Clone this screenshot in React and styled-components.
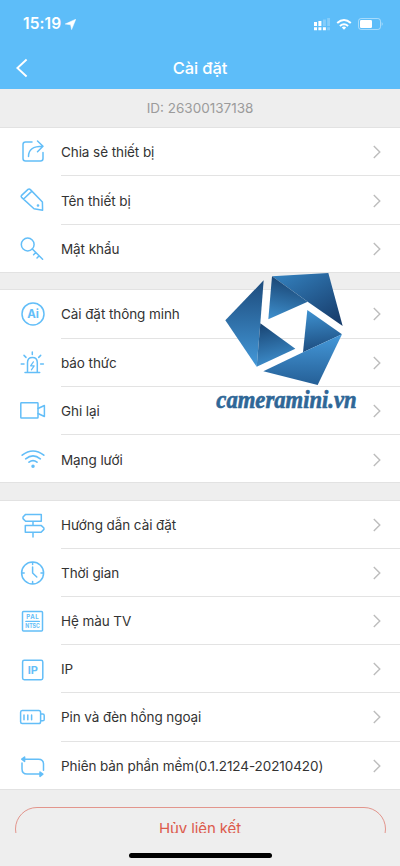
import styled, { createGlobalStyle } from "styled-components";

const GlobalStyle = createGlobalStyle`
    * {
        box-sizing: border-box;
    }

    body {
        margin: 0;
        background-color: #eee;
        font-family: Inter, "Noto Sans", sans-serif;
    }
`;

const Screen = styled.div`
    display: flex;
    flex-direction: column;
    width: 400px;
    height: 866px;
    overflow: hidden;
    background-color: #eeeeee;
`;

const Header = styled.header`
    height: 89px;
    flex-shrink: 0;
    background-color: #5dbdf9;
    color: #fff;
`;

const StatusBar = styled.div`
    display: flex;
    align-items: center;
    justify-content: space-between;
    height: 48px;
    padding: 0 17px 0 23px;
`;

const StatusGroup = styled.div`
    display: flex;
    align-items: center;
    gap: ${(props) => props.$gap}px;
`;

const Time = styled.span`
    font-size: 15.5px;
    font-weight: 600;
    line-height: 20px;
    letter-spacing: 0.1px;
`;

const NavBar = styled.div`
    display: grid;
    grid-template-columns: 50px 1fr 50px;
    align-items: center;
    height: 40px;
`;

const BackButton = styled.button`
    display: flex;
    padding: 0 0 0 15px;
    border: none;
    background: none;
    color: inherit;
`;

const Title = styled.h1`
    margin: 0;
    font-size: 16.5px;
    font-weight: 550;
    line-height: 24px;
    letter-spacing: -0.1px;
    text-align: center;
`;

const DeviceId = styled.div`
    height: 39.3px;
    flex-shrink: 0;
    border-bottom: 1px solid #dedede;
    color: #9b9b9b;
    font-size: 13.5px;
    line-height: 39px;
    text-align: center;
`;

const Groups = styled.main`
    display: flex;
    flex-direction: column;
    gap: 17.5px;
`;

const Group = styled.section`
    background-color: #fff;
    box-shadow:
        0 -1px 0 #e2e2e2,
        inset 0 -1px 0 #e2e2e2;
`;

const Row = styled.div`
    display: flex;
    align-items: stretch;
    height: 48.2px;
    padding-left: 19px;
`;

const RowIcon = styled.svg`
    flex-shrink: 0;
    width: 28px;
    height: 28px;
    margin: 10px 14px 0 0;
    fill: none;
    stroke: #63bef8;
    stroke-width: 1.5;
    stroke-linejoin: round;
    stroke-linecap: round;

    & text {
        fill: #63bef8;
        stroke: none;
        font-weight: 700;
    }
`;

const RowBody = styled.div`
    display: flex;
    flex: 1;
    align-items: center;
    justify-content: space-between;
    padding: 1px 18px 0 0;
    border-bottom: ${(props) => (props.$last ? "none" : "1px solid #e3e3e3")};
`;

const Label = styled.span`
    color: #333;
    font-size: 13.5px;
    line-height: 20px;
    letter-spacing: -0.08px;
    white-space: nowrap;
`;

const Footer = styled.footer`
    display: flex;
    flex: 1;
    flex-direction: column;
    align-items: center;
    padding-top: 17.2px;
`;

const ButtonClip = styled.div`
    width: 371px;
    height: 26px;
    overflow: hidden;
`;

const UnlinkButton = styled.button`
    width: 100%;
    height: 44px;
    padding: 0;
    border: 1px solid #e2958c;
    border-radius: 22px;
    background: none;
    color: #dc5b4c;
    font-family: inherit;
    font-size: 15px;
    line-height: 42px;
    letter-spacing: -0.1px;
`;

const HomeIndicator = styled.div`
    width: 143px;
    height: 5px;
    margin-top: 20px;
    border-radius: 3px;
    background-color: #000;
`;

const Watermark = styled.svg`
    position: absolute;
    top: 262px;
    left: 205px;
    width: 195px;
    height: 160px;
    pointer-events: none;
`;

const icons = {
    share: (
        <>
            <path d="M13 4H6.5Q4 4 4 6.5v14Q4 23 6.5 23h15q2.5 0 2.5-2.5V14.5" />
            <path d="M9.5 18.5C9.5 11.5 13.5 8.3 23.8 8.3M18.5 3l5.5 5.3-5.5 5.5" />
        </>
    ),
    pencil: (
        <>
            <path d="M2.6 9.4 9 3.4q1.2-1 2.4.2l12 12.4.2 8.2-8.6-1.4L2.6 11.4q-1-1 0-2zM4.6 13l8-7.6" />
            <circle cx="19" cy="19.5" r=".6" />
        </>
    ),
    key: (
        <>
            <circle cx="8.7" cy="9.5" r="6.4" />
            <path d="m13.3 14 10.3 10.2M16.8 17.5l-2.2 2.2M20.2 20.8 18 23" />
        </>
    ),
    ai: (
        <>
            <circle cx="14" cy="13.9" r="11" />
            <text x="14" y="18" fontSize="11.5" textAnchor="middle">
                Ai
            </text>
        </>
    ),
    alarm: (
        <>
            <path d="M8.5 23.4v-10q0-5 4.9-5t4.9 5v10M6 23.4h14.7M13.3 3v2.6M5 6.4l2 2M21.7 6.4l-2 2M2.2 15h2.8M21.6 15h2.8" />
            <path d="m14.4 12.8-2.8 4h3.6l-2.8 4" strokeWidth="1.2" />
        </>
    ),
    camera: (
        <>
            <rect x="1.8" y="5.8" width="17.2" height="15.2" rx=".6" />
            <path d="m19 11.5 6.4-3v11l-6.4-3" />
        </>
    ),
    wifi: (
        <>
            <path
                d="M3.2 10.2q10.8-8.4 21.6 0M6.7 13.8q7.3-5.8 14.6 0M10 17.2q4-3.2 8 0"
                strokeWidth="1.7"
            />
            <circle cx="14" cy="21.2" r="1" fill="#63bef8" />
        </>
    ),
    sign: (
        <path d="M6.6 3.4h15.7v6.8H6.6L4 7.6V6zM6.3 14.4h15.8l2.8 2.6v1.4l-2.8 2.8H6.3zM14 10.2v4.2M14 21.2V26" />
    ),
    clock: (
        <path d="M24.6 14a11 11 0 1 1-22 0 11 11 0 0 1 22 0zM13.6 3v2.6M13.6 22.4V25M2.6 14h2.6M22 14h2.6M13.6 8v6l4.2 4" />
    ),
    tv: (
        <>
            <rect x="3.5" y="4.5" width="20" height="19.6" rx="1" />
            <text x="7.2" y="12" fontSize="6" textLength="12.4">
                PAL
            </text>
            <path d="M6.8 14.4h13.6" strokeWidth="1.2" />
            <text
                x="6.2"
                y="21.3"
                fontSize="5.6"
                textLength="14.6"
                lengthAdjust="spacingAndGlyphs"
            >
                NTSC
            </text>
        </>
    ),
    ip: (
        <>
            <rect x="3.6" y="5.3" width="20.2" height="19.4" rx="1.6" />
            <text x="13.8" y="18.9" fontSize="11" textAnchor="middle">
                IP
            </text>
        </>
    ),
    battery: (
        <path d="M3.2 7.6h16.6q1.8 0 1.8 1.8v9.4q0 1.8-1.8 1.8H3.2q-1.6 0-1.6-1.8V9.4q0-1.8 1.6-1.8zM21.8 11h2q1.4 0 1.4 1.4v4q0 1.4-1.4 1.4h-2M5 12v4.8M8.8 12v4.8M12.6 12v4.8" />
    ),
    loop: (
        <>
            <path d="M4 7.2h15.5q5 0 5 5v6M3 11v6q0 5 5 5h14.5" />
            <path
                d="M5.6 5 2.8 7.2l2.8 2.2zM21 20l2.8 2.2L21 24.4z"
                fill="#63bef8"
            />
        </>
    ),
};

const GROUPS = [
    [
        { icon: "share", label: "Chia sẻ thiết bị" },
        { icon: "pencil", label: "Tên thiết bị" },
        { icon: "key", label: "Mật khẩu" },
    ],
    [
        { icon: "ai", label: "Cài đặt thông minh" },
        { icon: "alarm", label: "báo thức" },
        { icon: "camera", label: "Ghi lại" },
        { icon: "wifi", label: "Mạng lưới" },
    ],
    [
        { icon: "sign", label: "Hướng dẫn cài đặt" },
        { icon: "clock", label: "Thời gian" },
        { icon: "tv", label: "Hệ màu TV" },
        { icon: "ip", label: "IP" },
        { icon: "battery", label: "Pin và đèn hồng ngoại" },
        { icon: "loop", label: "Phiên bản phần mềm(0.1.2124-20210420)" },
    ],
];

function StatusIcons() {
    return (
        <StatusGroup $gap={6}>
            <svg width="16" height="13" viewBox="0 0 16 13" fill="#fff">
                <path d="M0 4h3v4H0zM4.4 3h3v5h-3zM0 9.3h3v2.9H0zM4.4 9.3h3v2.9h-3zM8.9 9.3h3v2.9h-3z" />
                <path
                    d="M8.9 1.6h3V8h-3zM13.2 0h3v8h-3zM13.2 9.3h3v2.9h-3z"
                    opacity=".25"
                />
            </svg>
            <svg
                width="16"
                height="13"
                viewBox="0 0 16 13"
                fill="none"
                stroke="#fff"
                strokeWidth="2"
            >
                <path d="M1.2 5q6.8-6 13.6 0M3.9 8q4.1-3.5 8.2 0" />
                <path
                    d="M5.8 9.5q2.2-1.8 4.4 0L8 11.8z"
                    fill="#fff"
                    stroke="none"
                />
            </svg>
            <svg width="25" height="12" viewBox="0 0 25 12">
                <rect
                    x=".5"
                    y=".5"
                    width="22"
                    height="11"
                    rx="2.6"
                    fill="none"
                    stroke="#fff"
                    opacity=".45"
                />
                <rect
                    x="2"
                    y="2"
                    width="12"
                    height="8"
                    rx="1.2"
                    fill="#fff"
                />
                <path d="M23.7 4q2 2 0 4z" fill="#fff" opacity=".5" />
            </svg>
        </StatusGroup>
    );
}

function SettingRow({ icon, label, last }) {
    return (
        <Row>
            <RowIcon viewBox="0 0 28 28">{icons[icon]}</RowIcon>
            <RowBody $last={last}>
                <Label>{label}</Label>
                <svg
                    width="10"
                    height="14"
                    viewBox="0 0 10 14"
                    fill="none"
                    stroke="#bdbdbd"
                    strokeWidth="1.4"
                >
                    <path d="m1.8 1 6 6-6 6" />
                </svg>
            </RowBody>
        </Row>
    );
}

function Gradient({ id, from, to, x2 = 0, y2 = 1 }) {
    return (
        <linearGradient id={id} x1="0" y1="0" x2={x2} y2={y2}>
            <stop offset="0" stopColor={from} />
            <stop offset="1" stopColor={to} />
        </linearGradient>
    );
}

function Logo() {
    return (
        <Watermark viewBox="0 0 585 480">
            <defs>
                <Gradient id="left" from="#1d4b7c" to="#4398d8" />
                <Gradient id="leftIn" from="#17416f" to="#3d8dcb" x2={0.2} />
                <Gradient id="top" from="#3584c2" to="#183e6d" x2={0.8} />
                <Gradient id="topIn" from="#1b4877" to="#4094d3" x2={-0.2} />
                <Gradient id="rightIn" from="#3f93d2" to="#1d4d80" x2={0.1} />
                <Gradient id="bottom" from="#4599da" to="#255f96" />
            </defs>
            <path d="M176 55 61 175l94 139 11-130z" fill="url(#left)" />
            <path d="m166 184 105 76-116 54z" fill="url(#leftIn)" />
            <path d="m201 43 169-10 43 159-105-73z" fill="url(#top)" />
            <path d="m201 43 107 76-118 53z" fill="url(#topIn)" />
            <path d="m307 144 104 73-117 54z" fill="url(#rightIn)" />
            <path d="m411 217-73 152-163-41 119-57z" fill="url(#bottom)" />
            <text
                x="34"
                y="438"
                fontFamily="'Liberation Serif', serif"
                fontSize="77"
                fontWeight="700"
                fontStyle="italic"
                textLength="421"
                lengthAdjust="spacingAndGlyphs"
                fill="#2f6797"
                stroke="#2f6797"
                strokeWidth="2"
            >
                cameramini.vn
            </text>
        </Watermark>
    );
}

function App() {
    return (
        <>
            <GlobalStyle />
            <Screen>
                <Header>
                    <StatusBar>
                        <StatusGroup $gap={4}>
                            <Time>15:19</Time>
                            <svg width="11" height="11" viewBox="0 0 11 11">
                                <path
                                    d="M10.8.2 6.6 10.6 5.6 5.8.2 5z"
                                    fill="#fff"
                                    stroke="#fff"
                                    strokeWidth=".5"
                                />
                            </svg>
                        </StatusGroup>
                        <StatusIcons />
                    </StatusBar>
                    <NavBar>
                        <BackButton aria-label="Back">
                            <svg
                                width="14"
                                height="20"
                                viewBox="0 0 14 20"
                                fill="none"
                                stroke="#fff"
                                strokeWidth="1.9"
                            >
                                <path d="m11.6 1.5-9.2 8.5 9.2 8.5" />
                            </svg>
                        </BackButton>
                        <Title>Cài đặt</Title>
                    </NavBar>
                </Header>
                <DeviceId>ID: 26300137138</DeviceId>
                <Groups>
                    {GROUPS.map((rows, i) => (
                        <Group key={i}>
                            {rows.map((row, j) => (
                                <SettingRow
                                    key={row.icon}
                                    icon={row.icon}
                                    label={row.label}
                                    last={j === rows.length - 1}
                                />
                            ))}
                        </Group>
                    ))}
                </Groups>
                <Footer>
                    <ButtonClip>
                        <UnlinkButton>Hủy liên kết</UnlinkButton>
                    </ButtonClip>
                    <HomeIndicator />
                </Footer>
            </Screen>
            <Logo />
        </>
    );
}

export default App;
